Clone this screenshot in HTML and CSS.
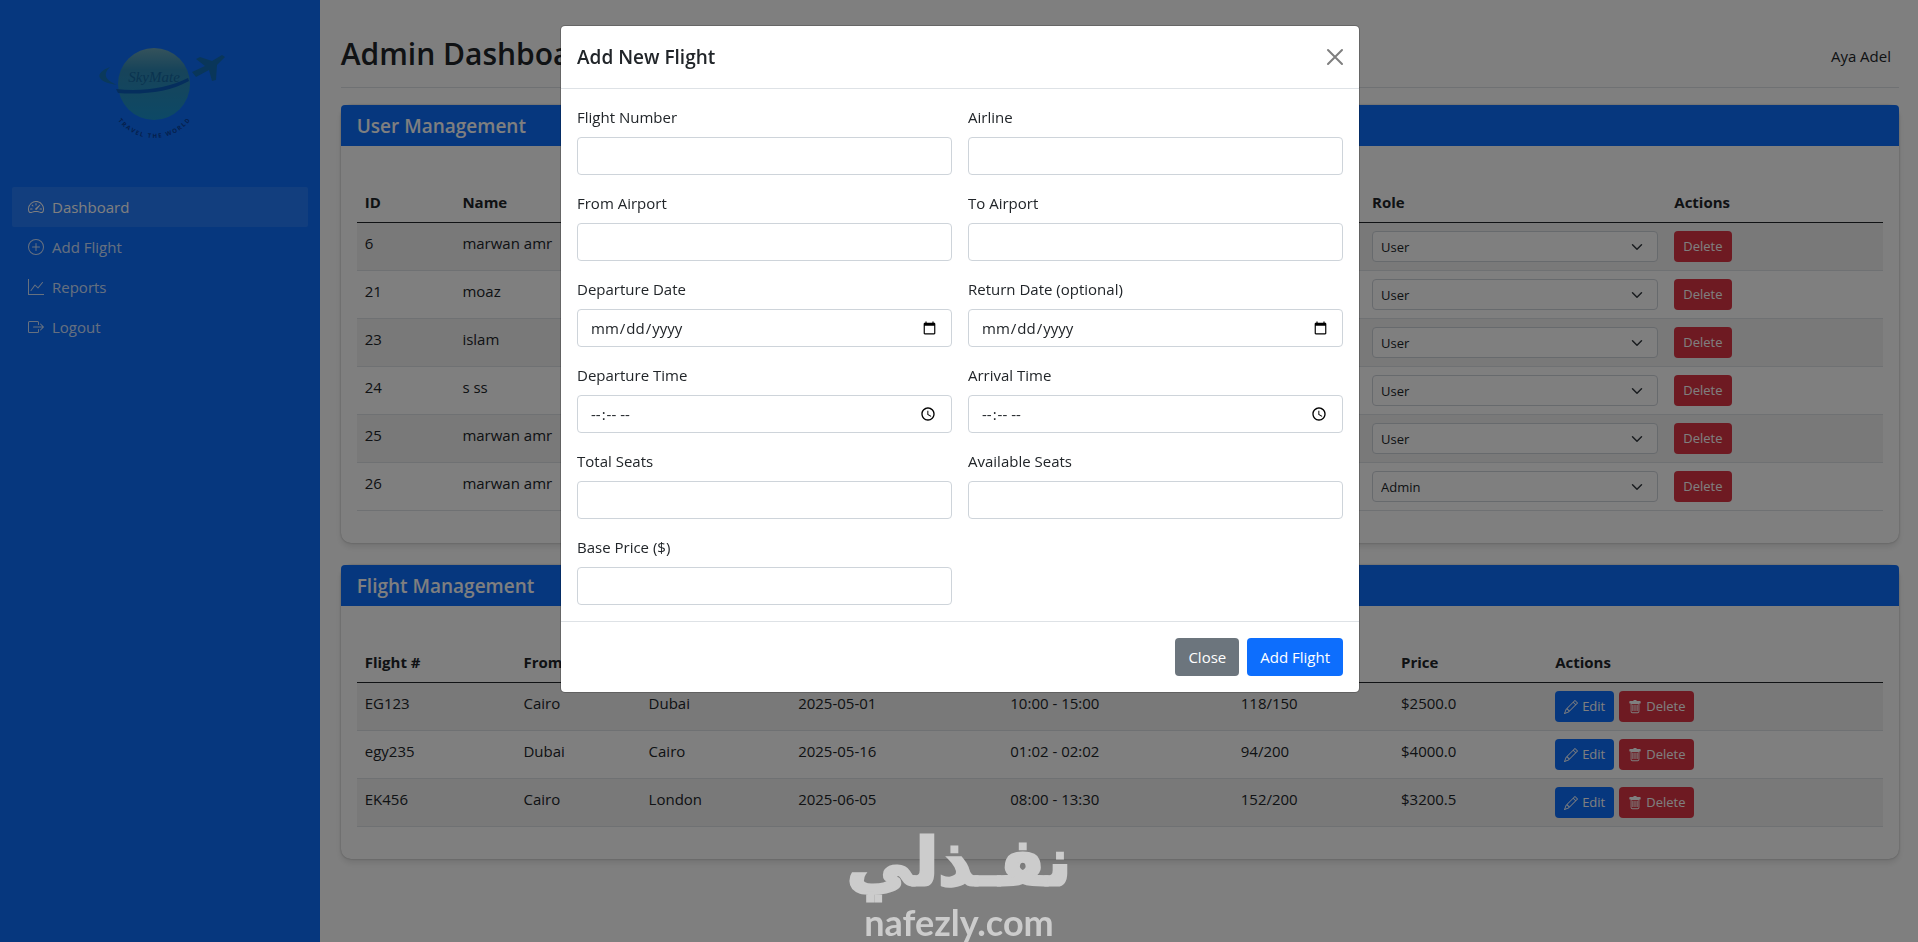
FILE: index.html
```html
<!DOCTYPE html>
<html lang="en">
<head>
	<meta charset="UTF-8">
	<meta name="viewport" content="width=device-width, initial-scale=1.0">
	<title>Admin Dashboard</title>
	<link rel="stylesheet" href="styles.css">
</head>
<body>

	<!-- Icon set -->
	<svg class="icon-defs" aria-hidden="true">
		<symbol id="speedometer" viewBox="0 0 16 16">
			<path d="M8 4a.5.5 0 0 1 .5.5V6a.5.5 0 0 1-1 0V4.500A.5.5 0 0 1 8 4zM3.732 5.732a.5.5 0 0 1 .707 0l.915.914a.5.5 0 1 1-.708.708l-.914-.915a.5.5 0 0 1 0-.707zM2 10a.5.5 0 0 1 .5-.5h1.586a.5.5 0 0 1 0 1H2.500A.5.5 0 0 1 2 10zm9.500 0a.5.5 0 0 1 .5-.5h1.500a.5.5 0 0 1 0 1H12a.5.5 0 0 1-.5-.5zm.754-4.246a.389.389 0 0 0-.527-.02L7.547 9.310a.910.910 0 1 0 1.302 1.258l3.434-4.297a.389.389 0 0 0-.029-.518z"/>
			<path fill-rule="evenodd" d="M0 10a8 8 0 1 1 15.547 2.661c-.442 1.253-1.845 1.602-2.932 1.250C11.309 13.488 9.475 13 8 13c-1.474 0-3.310.488-4.615.911-1.087.352-2.490.003-2.932-1.250A7.988 7.988 0 0 1 0 10zm8-7a7 7 0 0 0-6.603 9.329c.203.575.923.876 1.680.630C4.397 12.533 6.358 12 8 12s3.604.532 4.923.960c.757.245 1.477-.056 1.680-.631A7 7 0 0 0 8 3z"/>
		</symbol>
		<symbol id="plus-circle" viewBox="0 0 16 16">
			<path d="M8 15A7 7 0 1 1 8 1a7 7 0 0 1 0 14zm0 1A8 8 0 1 0 8 0a8 8 0 0 0 0 16z"/>
			<path d="M8 4a.5.5 0 0 1 .5.5v3h3a.5.5 0 0 1 0 1h-3v3a.5.5 0 0 1-1 0v-3h-3a.5.5 0 0 1 0-1h3v-3A.5.5 0 0 1 8 4z"/>
		</symbol>
		<symbol id="graph-up" viewBox="0 0 16 16">
			<path fill-rule="evenodd" d="M0 0h1v15h15v1H0V0zm14.817 3.113a.5.5 0 0 1 .07.704l-4.500 5.500a.5.5 0 0 1-.740.037L7.060 6.767l-3.656 5.027a.5.5 0 0 1-.808-.588l4-5.500a.5.5 0 0 1 .758-.06l2.609 2.610 4.150-5.073a.5.5 0 0 1 .704-.07z"/>
		</symbol>
		<symbol id="box-arrow" viewBox="0 0 16 16">
			<path fill-rule="evenodd" d="M10 12.500a.5.5 0 0 1-.5.5h-8a.5.5 0 0 1-.5-.5v-9a.5.5 0 0 1 .5-.5h8a.5.5 0 0 1 .5.5v2a.5.5 0 0 0 1 0v-2A1.500 1.500 0 0 0 9.500 2h-8A1.500 1.500 0 0 0 0 3.500v9A1.500 1.500 0 0 0 1.500 14h8a1.500 1.500 0 0 0 1.500-1.500v-2a.5.5 0 0 0-1 0v2z"/>
			<path fill-rule="evenodd" d="M15.854 8.354a.5.5 0 0 0 0-.708l-3-3a.5.5 0 0 0-.708.708L14.293 7.500H5.500a.5.5 0 0 0 0 1h8.793l-2.147 2.146a.5.5 0 0 0 .708.708l3-3z"/>
		</symbol>
		<symbol id="pencil" viewBox="0 0 16 16">
			<path d="M12.146.146a.5.5 0 0 1 .708 0l3 3a.5.5 0 0 1 0 .708l-10 10a.5.5 0 0 1-.168.110l-5 2a.5.5 0 0 1-.650-.650l2-5a.5.5 0 0 1 .110-.168l10-10zM11.207 2.500 13.500 4.793 14.793 3.500 12.500 1.207 11.207 2.500zm1.586 3L10.500 3.207 4 9.707V10h.5a.5.5 0 0 1 .5.5v.5h.5a.5.5 0 0 1 .5.5v.5h.293l6.500-6.500zm-9.761 5.175-.106.106-1.528 3.821 3.821-1.528.106-.106A.5.5 0 0 1 5 12.500V12h-.5a.5.5 0 0 1-.5-.5V11h-.5a.5.5 0 0 1-.468-.325z"/>
		</symbol>
		<symbol id="trash" viewBox="0 0 16 16">
			<path d="M5 5.500h1.200v7H5zM7.400 5.500h1.200v7H7.400zM9.800 5.500H11v7H9.800z"/>
			<path fill-rule="evenodd" d="M14.500 3a1 1 0 0 1-1 1H13v9a2 2 0 0 1-2 2H5a2 2 0 0 1-2-2V4h-.5a1 1 0 0 1-1-1V2a1 1 0 0 1 1-1H6a1 1 0 0 1 1-1h2a1 1 0 0 1 1 1h3.500a1 1 0 0 1 1 1v1zM4 4.500V13a1 1 0 0 0 1 1h6a1 1 0 0 0 1-1V4.500z"/>
		</symbol>
	</svg>

	<div class="layout">

		<!-- Sidebar -->
		<nav class="sidebar">
			<svg class="logo" viewBox="0 0 150 110" role="img" aria-label="SkyMate">
				<defs>
					<linearGradient id="globe" x1="0" y1="0" x2="0" y2="1">
						<stop offset="0" stop-color="#6aa6b8"/>
						<stop offset="0.3" stop-color="#2f88b4"/>
						<stop offset="1" stop-color="#1a92cc"/>
					</linearGradient>
					<path id="tagline" d="M18 62 A46 46 0 0 0 110 62"/>
				</defs>
				<path d="M20 37 C4 43 6 52 27 55 C16 50 12 45 20 37z" fill="#1473b8"/>
				<circle cx="64" cy="54" r="36" fill="url(#globe)"/>
				<path d="M26 59 C52 62 78 58 98 48 L99 51 C80 62 52 65 28 63z" fill="#0a5cba"/>
				<text x="64" y="52" text-anchor="middle" class="logo-name">SkyMate</text>
				<text class="logo-tagline" text-anchor="middle"><textPath href="#tagline" startOffset="50%">T R A V E L &#160; T H E &#160; W O R L D</textPath></text>
				<path d="M102 42 L115 36 L106 29 L110 27 L122 31 L132 25 L135 27 L127 35 L126 50 L122 51 L119 40 L106 47z" fill="#126cb4"/>
			</svg>
			<ul class="nav">
				<li><a class="nav-link active" href="#"><svg class="icon"><use href="#speedometer"/></svg>Dashboard</a></li>
				<li><a class="nav-link" href="#"><svg class="icon"><use href="#plus-circle"/></svg>Add Flight</a></li>
				<li><a class="nav-link" href="#"><svg class="icon"><use href="#graph-up"/></svg>Reports</a></li>
				<li><a class="nav-link" href="#"><svg class="icon"><use href="#box-arrow"/></svg>Logout</a></li>
			</ul>
		</nav>

		<main class="main">
			<div class="page-header">
				<h1>Admin Dashboard</h1>
				<span class="user-name">Aya Adel</span>
			</div>

			<!-- Users -->
			<section class="card">
				<h2 class="card-header">User Management</h2>
				<div class="card-body">
					<table class="table users">
						<thead>
							<tr><th class="col-id">ID</th><th>Name</th><th class="col-role">Role</th><th class="col-user-actions">Actions</th></tr>
						</thead>
						<tbody>
							<tr>
								<td>6</td><td>marwan amr</td>
								<td><select class="role-select" aria-label="Role"><option selected>User</option><option>Admin</option></select></td>
								<td><button type="button" class="btn btn-sm btn-danger">Delete</button></td>
							</tr>
							<tr>
								<td>21</td><td>moaz</td>
								<td><select class="role-select" aria-label="Role"><option selected>User</option><option>Admin</option></select></td>
								<td><button type="button" class="btn btn-sm btn-danger">Delete</button></td>
							</tr>
							<tr>
								<td>23</td><td>islam</td>
								<td><select class="role-select" aria-label="Role"><option selected>User</option><option>Admin</option></select></td>
								<td><button type="button" class="btn btn-sm btn-danger">Delete</button></td>
							</tr>
							<tr>
								<td>24</td><td>s ss</td>
								<td><select class="role-select" aria-label="Role"><option selected>User</option><option>Admin</option></select></td>
								<td><button type="button" class="btn btn-sm btn-danger">Delete</button></td>
							</tr>
							<tr>
								<td>25</td><td>marwan amr</td>
								<td><select class="role-select" aria-label="Role"><option selected>User</option><option>Admin</option></select></td>
								<td><button type="button" class="btn btn-sm btn-danger">Delete</button></td>
							</tr>
							<tr>
								<td>26</td><td>marwan amr</td>
								<td><select class="role-select" aria-label="Role"><option>User</option><option selected>Admin</option></select></td>
								<td><button type="button" class="btn btn-sm btn-danger">Delete</button></td>
							</tr>
						</tbody>
					</table>
				</div>
			</section>

			<!-- Flights -->
			<section class="card">
				<h2 class="card-header">Flight Management</h2>
				<div class="card-body">
					<table class="table flights">
						<thead>
							<tr>
								<th class="col-number">Flight #</th><th class="col-from">From</th><th class="col-to">To</th><th class="col-date">Date</th>
								<th class="col-time">Time</th><th class="col-seats">Seats</th><th class="col-price">Price</th><th>Actions</th>
							</tr>
						</thead>
						<tbody>
							<tr>
								<td>EG123</td><td>Cairo</td><td>Dubai</td><td>2025-05-01</td><td>10:00 - 15:00</td><td>118/150</td><td>$2500.0</td>
								<td>
									<div class="actions">
										<button type="button" class="btn btn-sm btn-primary"><svg class="icon"><use href="#pencil"/></svg>Edit</button>
										<button type="button" class="btn btn-sm btn-danger"><svg class="icon"><use href="#trash"/></svg>Delete</button>
									</div>
								</td>
							</tr>
							<tr>
								<td>egy235</td><td>Dubai</td><td>Cairo</td><td>2025-05-16</td><td>01:02 - 02:02</td><td>94/200</td><td>$4000.0</td>
								<td>
									<div class="actions">
										<button type="button" class="btn btn-sm btn-primary"><svg class="icon"><use href="#pencil"/></svg>Edit</button>
										<button type="button" class="btn btn-sm btn-danger"><svg class="icon"><use href="#trash"/></svg>Delete</button>
									</div>
								</td>
							</tr>
							<tr>
								<td>EK456</td><td>Cairo</td><td>London</td><td>2025-06-05</td><td>08:00 - 13:30</td><td>152/200</td><td>$3200.5</td>
								<td>
									<div class="actions">
										<button type="button" class="btn btn-sm btn-primary"><svg class="icon"><use href="#pencil"/></svg>Edit</button>
										<button type="button" class="btn btn-sm btn-danger"><svg class="icon"><use href="#trash"/></svg>Delete</button>
									</div>
								</td>
							</tr>
						</tbody>
					</table>
				</div>
			</section>
		</main>
	</div>

	<!-- Add flight modal -->
	<div class="modal" role="dialog" aria-modal="true" aria-labelledby="modal-title">
		<form class="modal-content">
			<div class="modal-header">
				<h2 id="modal-title">Add New Flight</h2>
				<button type="button" class="btn-close" aria-label="Close">
					<svg viewBox="0 0 16 16"><path d="M1 1l14 14M15 1L1 15"/></svg>
				</button>
			</div>
			<div class="modal-body">
				<div class="field">
					<label for="flight-number">Flight Number</label>
					<input type="text" id="flight-number" name="flight_number">
				</div>
				<div class="field">
					<label for="airline">Airline</label>
					<input type="text" id="airline" name="airline">
				</div>
				<div class="field">
					<label for="from-airport">From Airport</label>
					<input type="text" id="from-airport" name="from_airport">
				</div>
				<div class="field">
					<label for="to-airport">To Airport</label>
					<input type="text" id="to-airport" name="to_airport">
				</div>
				<div class="field">
					<label for="departure-date">Departure Date</label>
					<input type="date" id="departure-date" name="departure_date">
				</div>
				<div class="field">
					<label for="return-date">Return Date (optional)</label>
					<input type="date" id="return-date" name="return_date">
				</div>
				<div class="field">
					<label for="departure-time">Departure Time</label>
					<input type="time" id="departure-time" name="departure_time">
				</div>
				<div class="field">
					<label for="arrival-time">Arrival Time</label>
					<input type="time" id="arrival-time" name="arrival_time">
				</div>
				<div class="field">
					<label for="total-seats">Total Seats</label>
					<input type="number" id="total-seats" name="total_seats">
				</div>
				<div class="field">
					<label for="available-seats">Available Seats</label>
					<input type="number" id="available-seats" name="available_seats">
				</div>
				<div class="field">
					<label for="base-price">Base Price ($)</label>
					<input type="number" id="base-price" name="base_price">
				</div>
			</div>
			<div class="modal-footer">
				<button type="button" class="btn btn-secondary">Close</button>
				<button type="submit" class="btn btn-primary">Add Flight</button>
			</div>
		</form>
	</div>

	<div class="watermark">
		<span class="watermark-ar" lang="ar" dir="rtl">نفـذلي</span>
		<span class="watermark-en">nafezly.com</span>
	</div>

</body>
</html>
```
FILE: styles.css
```css
* {
	box-sizing: border-box;
}
body {
	margin: 0;
	font-family: "Open Sans", "Noto Sans", sans-serif;
	font-size: 15px;
	line-height: 24px;
	color: #212529;
	background-color: #fff;
}
h1, h2 {
	margin: 0;
	font-weight: 600;
}
button, input, select {
	font-family: inherit;
}
.icon-defs {
	display: none;
}
.icon {
	width: 16px;
	height: 16px;
	fill: currentColor;
	flex: none;
}
.layout {
	display: flex;
	min-height: 100vh;
}

/* Sidebar */
.sidebar {
	width: 16.67%;
	padding: 30px 12px;
	background-color: #0d6efd;
}
.logo {
	display: block;
	width: 150px;
	height: 110px;
	margin: 0 auto 47px 78px;
}
.logo-name {
	font-family: "Liberation Serif", serif;
	font-style: italic;
	font-size: 15px;
	fill: #14679f;
}
.logo-tagline {
	font-size: 6px;
	font-weight: bold;
	fill: #0a3f98;
}
.nav {
	margin: 0;
	padding: 0;
	list-style: none;
}
.nav-link {
	display: flex;
	align-items: center;
	gap: 8px;
	padding: 8px 16px;
	border-radius: 2px;
	color: rgba(255,255,255,0.8);
	text-decoration: none;
}
.nav-link.active {
	color: #fff;
	background-color: rgba(255,255,255,0.1);
}

/* Main column */
.main {
	flex: 1;
	padding: 36px 19px 20px 21px;
}
.page-header {
	display: flex;
	justify-content: space-between;
	align-items: center;
	padding: 0 8px 12px 0;
	margin-bottom: 17px;
	border-bottom: 1px solid #dee2e6;
}
.page-header h1 {
	padding-bottom: 4px;
	font-size: 30px;
	line-height: 35px;
}
.card {
	margin-bottom: 22px;
	border-radius: 10px;
	box-shadow: 0 4px 6px rgba(0,0,0,0.1), 0 0 2px rgba(0,0,0,0.3);
}
.card-header {
	padding: 9px 16px 8px;
	border-radius: 4px 4px 0 0;
	background-color: #0d6efd;
	color: #fff;
	font-size: 19px;
	line-height: 24px;
}
.card-body {
	padding: 36px 16px 32px;
}
.table {
	width: 100%;
	table-layout: fixed;
	border-collapse: collapse;
}
.table th, .table td {
	padding: 8px;
	text-align: left;
	vertical-align: top;
	border-bottom: 1px solid #dee2e6;
}
.table th {
	border-bottom-color: #212529;
}
.table td {
	height: 48px;
}
.table tbody tr:nth-child(odd) {
	background-color: rgba(0,0,0,0.05);
}
.col-id { width: 6.4%; }
.col-role { width: 19.8%; }
.col-user-actions { width: 14.2%; }
.col-number { width: 10.4%; }
.col-from { width: 8.2%; }
.col-to { width: 9.8%; }
.col-date { width: 13.9%; }
.col-time { width: 15.1%; }
.col-seats { width: 10.5%; }
.col-price { width: 10.1%; }
.role-select {
	display: block;
	width: 100%;
	height: 31px;
	padding: 4px 36px 4px 8px;
	border: 1px solid #ced4da;
	border-radius: 4px;
	appearance: none;
	color: #212529;
	font-size: 13px;
	background: #fff url("data:image/svg+xml,%3Csvg xmlns='http://www.w3.org/2000/svg' viewBox='0 0 16 16'%3E%3Cpath fill='none' stroke='%23343a40' stroke-linecap='round' stroke-linejoin='round' stroke-width='2' d='M2 5l6 6 6-6'/%3E%3C/svg%3E") no-repeat right 12px center / 16px 12px;
}

/* Buttons */
.btn {
	padding: 7px 13px;
	border: 0;
	border-radius: 4px;
	color: #fff;
	font-size: 15px;
	line-height: 24px;
	cursor: pointer;
}
.btn-sm {
	display: flex;
	align-items: center;
	gap: 4px;
	padding: 5px 9px;
	font-size: 13px;
	line-height: 21px;
}
.btn-sm .icon {
	width: 14px;
	height: 14px;
}
.btn-primary { background-color: #0d6efd; }
.btn-secondary { background-color: #6c757d; }
.btn-danger { background-color: #dc3545; }
.actions {
	display: flex;
	gap: 5px;
}

/* Modal */
.modal {
	position: fixed;
	inset: 0;
	overflow: auto;
	padding: 25px 15px 25px 17px;
	background-color: rgba(0,0,0,0.5);
}
.modal-content {
	max-width: 800px;
	margin: 0 auto;
	border: 1px solid rgba(0,0,0,0.2);
	border-radius: 5px;
	background-color: #fff;
	background-clip: padding-box;
}
.modal-header {
	display: flex;
	justify-content: space-between;
	align-items: center;
	padding: 16px;
	border-bottom: 1px solid #dee2e6;
}
.modal-header h2 {
	font-size: 19px;
	line-height: 30px;
}
.btn-close {
	padding: 4px 0;
	border: 0;
	background: none;
	cursor: pointer;
}
.btn-close svg {
	display: block;
	width: 16px;
	height: 16px;
	overflow: visible;
	stroke: #7f7f7f;
	stroke-width: 2;
	stroke-linecap: round;
}
.modal-body {
	display: grid;
	grid-template-columns: 1fr 1fr;
	gap: 16px;
	padding: 16px;
}
.field label {
	display: block;
	margin-bottom: 8px;
}
.field input {
	display: block;
	width: 100%;
	height: 38px;
	padding: 6px 12px;
	border: 1px solid #ced4da;
	border-radius: 4px;
	color: #212529;
	background-color: #fff;
	font-size: 15px;
}
.modal-footer {
	display: flex;
	justify-content: flex-end;
	gap: 8px;
	padding: 16px;
	border-top: 1px solid #dee2e6;
}

/* Brand mark over the page */
.watermark {
	position: fixed;
	left: 0;
	right: 0;
	bottom: 0;
	display: flex;
	flex-direction: column;
	align-items: center;
	color: #ccc;
	font-weight: bold;
	pointer-events: none;
}
.watermark-ar {
	font-family: "DejaVu Sans", sans-serif;
	font-size: 66px;
	line-height: 78px;
	-webkit-text-stroke: 3px #ccc;
}
.watermark-en {
	font-family: Lato, sans-serif;
	font-size: 36px;
	line-height: 40px;
}
```
